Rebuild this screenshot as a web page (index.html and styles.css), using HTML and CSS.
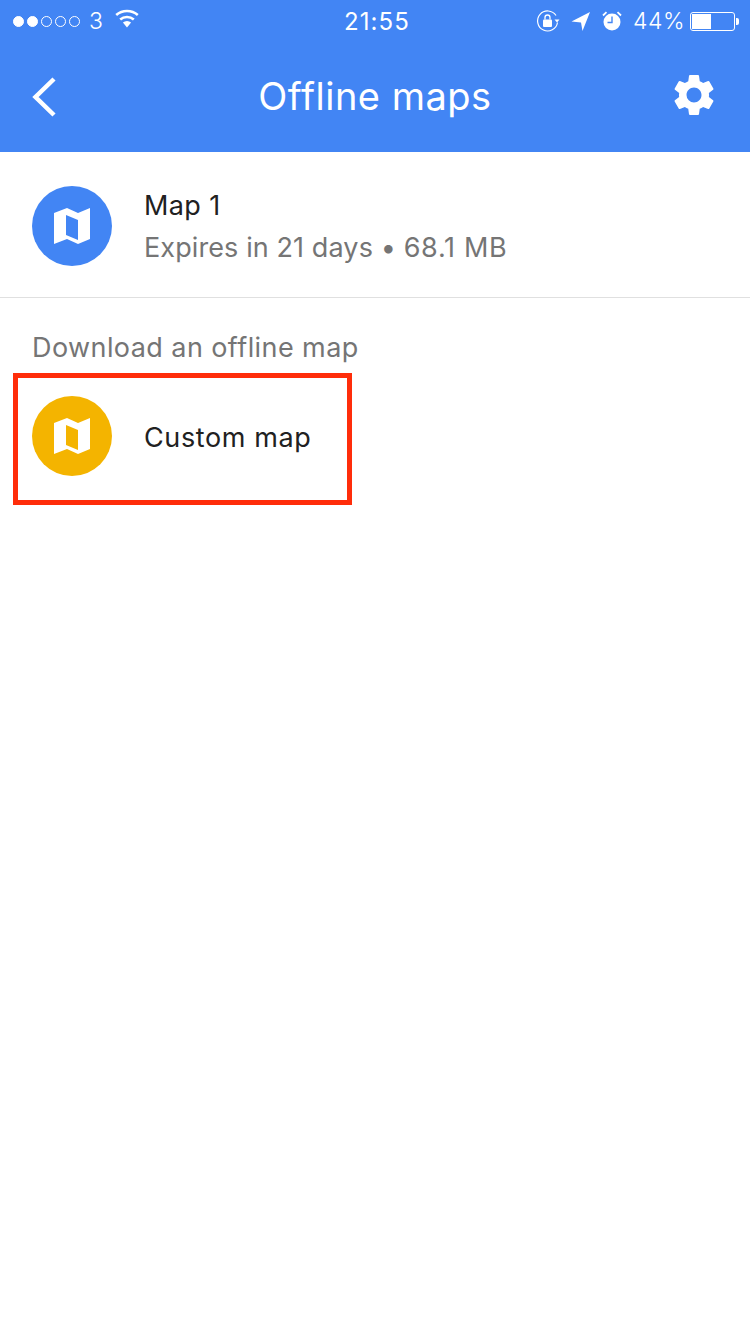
FILE: index.html
```html
<!DOCTYPE html>
<html lang="en">
<head>
  <meta charset="UTF-8" />
  <meta name="viewport" content="width=device-width, initial-scale=1.0"/>
  <title>Offline maps</title>
  <link rel="stylesheet" href="styles.css">
</head>
<body>
  <header class="top">
    <!-- Status bar -->
    <div class="status">
      <div class="status-side">
        <span class="dots">
          <i class="dot on"></i><i class="dot on"></i><i class="dot"></i><i class="dot"></i><i class="dot"></i>
        </span>
        <span class="carrier">3</span>
        <svg class="wifi" width="26" height="20" viewBox="0 0 26 20">
          <path d="M13 19.5 8.9 14.6a6.2 6.2 0 0 1 8.2 0z" fill="#fff"/>
          <path d="M6.2 11.6a10.4 10.4 0 0 1 13.6 0M2.2 7a16.4 16.4 0 0 1 21.6 0" fill="none" stroke="#fff" stroke-width="2.6"/>
        </svg>
      </div>
      <div class="clock">21:55</div>
      <div class="status-side">
        <svg class="lock" width="24" height="24" viewBox="0 0 24 24">
          <path d="M21.5 13.5A10 10 0 1 1 20 6.5" fill="none" stroke="#fff" stroke-width="1.2"/>
          <path d="M18.5 10.5h5l-2.5 3z" fill="#fff"/>
          <rect x="7" y="10.5" width="9" height="7.5" rx="1" fill="#fff"/>
          <path d="M9 10.5V8.500a2.500 2.500 0 0 1 5 0v2" fill="none" stroke="#fff" stroke-width="1.300"/>
        </svg>
        <svg class="arrow" width="20" height="20" viewBox="0 0 20 20">
          <path d="M19 1 0.500 10.500 10 11.500 11.500 20z" fill="#fff"/>
        </svg>
        <svg class="alarm" width="20" height="20" viewBox="0 0 20 20">
          <circle cx="10" cy="11" r="8.500" fill="#fff"/>
          <path d="M10 5.500V11.500H5.500" fill="none" stroke="#4285f4" stroke-width="1.400"/>
          <path d="M1 4.500 4.500 1.200M19 4.500 15.500 1.200" fill="none" stroke="#fff" stroke-width="1.800"/>
        </svg>
        <span class="percent">44%</span>
        <div class="battery">
          <div class="battery-body"><div class="battery-fill"></div></div>
          <div class="battery-tip"></div>
        </div>
      </div>
    </div>

    <!-- Title bar -->
    <div class="titlebar">
      <svg class="back" width="26" height="40" viewBox="0 0 26 40">
        <path d="M23 2 4.500 20 23 38" fill="none" stroke="#fff" stroke-width="4.500"/>
      </svg>
      <h1>Offline maps</h1>
      <svg class="gear" width="50" height="50" viewBox="0 0 24 24">
        <path fill="#fff" d="M19.140 12.940c.04-.3.060-.61.060-.94 0-.32-.02-.64-.07-.94l2.030-1.580a.49.49 0 0 0 .12-.61l-1.920-3.320a.488.488 0 0 0-.59-.22l-2.390.96c-.5-.38-1.030-.7-1.620-.94l-.36-2.540a.484.484 0 0 0-.48-.41h-3.840c-.24 0-.43.17-.47.41l-.36 2.540c-.59.24-1.130.57-1.620.94l-2.390-.96c-.22-.08-.47 0-.59.22L2.740 8.870c-.12.21-.08.47.12.61l2.030 1.580c-.05.3-.09.63-.09.94s.02.64.07.94l-2.030 1.580a.49.49 0 0 0-.12.61l1.920 3.320c.12.22.37.29.59.22l2.390-.96c.5.38 1.030.7 1.620.94l.36 2.540c.05.24.24.41.48.41h3.840c.24 0 .44-.17.47-.41l.36-2.540c.59-.24 1.130-.56 1.620-.94l2.390.96c.22.080.47 0 .59-.22l1.920-3.320c.12-.22.070-.47-.12-.61l-2.010-1.580zM12 15.600A3.610 3.610 0 0 1 8.400 12c0-1.980 1.620-3.600 3.600-3.600s3.600 1.620 3.600 3.600-1.620 3.600-3.600 3.600z"/>
      </svg>
    </div>
  </header>

  <section class="saved">
    <div class="map-row">
      <div class="map-icon blue">
        <svg width="36" height="36" viewBox="0 0 36 36">
          <path fill="#fff" fill-rule="evenodd" d="M0 5 13 0 24 5 36 0V31L24 36 13 31 0 36zM12 7V27L24 32V12z"/>
        </svg>
      </div>
      <div class="map-text">
        <div class="map-name">Map 1</div>
        <div class="map-info">Expires in 21 days • <span class="map-size">68.1 MB</span></div>
      </div>
    </div>
  </section>

  <section class="download">
    <h2>Download an offline map</h2>
    <div class="map-row custom">
      <div class="map-icon yellow">
        <svg width="36" height="36" viewBox="0 0 36 36">
          <path fill="#fff" fill-rule="evenodd" d="M0 5 13 0 24 5 36 0V31L24 36 13 31 0 36zM12 7V27L24 32V12z"/>
        </svg>
      </div>
      <div class="map-name custom-name">Custom map</div>
    </div>
    <div class="highlight"></div>
  </section>
</body>
</html>
```

FILE: styles.css
```css
* {
  margin: 0;
  padding: 0;
  box-sizing: border-box;
}

body {
  background: #fff;
  font-family: 'Inter', 'Roboto', sans-serif;
  color: #212121;
  height: 1334px;
  overflow: hidden;
}

.top {
  background: #4285f4;
  color: #fff;
  height: 152px;
}

/* Status bar */
.status {
  height: 40px;
  padding: 2px 11px 0 13px;
  display: flex;
  align-items: center;
  justify-content: space-between;
  position: relative;
}

.status-side {
  display: flex;
  align-items: center;
}

.clock {
  position: absolute;
  left: 4px;
  right: 0;
  text-align: center;
  font-size: 24px;
  font-weight: 400;
  letter-spacing: 1.1px;
}

.dots {
  display: flex;
  gap: 3px;
}

.dot {
  display: block;
  width: 11px;
  height: 11px;
  border-radius: 50%;
  border: 1px solid #fff;
}

.dot.on {
  background: #fff;
}

.carrier {
  font-size: 23px;
  font-weight: 300;
  margin-left: 9px;
}

.wifi {
  margin-left: 11px;
  margin-top: -6px;
}

.lock {
  margin-right: 11px;
}

.arrow {
  margin-right: 11px;
}

.alarm {
  margin-right: 11px;
}

.percent {
  font-size: 23px;
  font-weight: 300;
  margin-right: 5px;
  letter-spacing: 0.5px;
}

.battery {
  display: flex;
  align-items: center;
}

.battery-body {
  width: 45px;
  height: 19px;
  border: 1px solid #fff;
  border-radius: 3px;
  padding: 1px;
}

.battery-fill {
  width: 19px;
  height: 100%;
  background: #fff;
}

.battery-tip {
  width: 3px;
  height: 7px;
  margin-left: 1px;
  background: #fff;
  border-radius: 0 2px 2px 0;
}

/* Title bar */
.titlebar {
  height: 112px;
  padding: 0 31px;
  display: flex;
  align-items: center;
  justify-content: space-between;
  position: relative;
}

.titlebar h1 {
  position: absolute;
  left: 0;
  right: 0;
  text-align: center;
  font-size: 38px;
  font-weight: 400;
  letter-spacing: 0.5px;
}

.back {
  margin-top: 2px;
}

.gear {
  margin-top: -2px;
}

/* Rows */
.saved {
  height: 146px;
  border-bottom: 1px solid #e0e0e0;
  padding-top: 34px;
}

.map-row {
  display: flex;
  align-items: center;
  padding-left: 32px;
}

.map-icon {
  width: 80px;
  height: 80px;
  border-radius: 50%;
  flex: none;
  display: flex;
  align-items: center;
  justify-content: center;
  margin-right: 32px;
}

.map-icon.blue {
  background: #4285f4;
}

.map-icon.yellow {
  background: #f4b400;
}

.map-name {
  font-size: 27px;
  color: #212121;
  letter-spacing: 0.4px;
}

.custom-name {
  letter-spacing: 0.6px;
  margin-top: 2px;
}

.map-info {
  font-size: 27px;
  color: #757575;
  margin-top: 9px;
  letter-spacing: 0.1px;
}

.map-size {
  letter-spacing: 0.7px;
}

.download {
  position: relative;
}

.download h2 {
  font-size: 27px;
  font-weight: 400;
  color: #757575;
  padding: 33px 0 0 32px;
  line-height: 33px;
  letter-spacing: 0.42px;
}

.custom {
  margin-top: 32px;
}

/* Red marker over the custom map row */
.highlight {
  position: absolute;
  left: 13px;
  top: 75px;
  width: 339px;
  height: 132px;
  border: 5px solid #ff2d0a;
}
```
